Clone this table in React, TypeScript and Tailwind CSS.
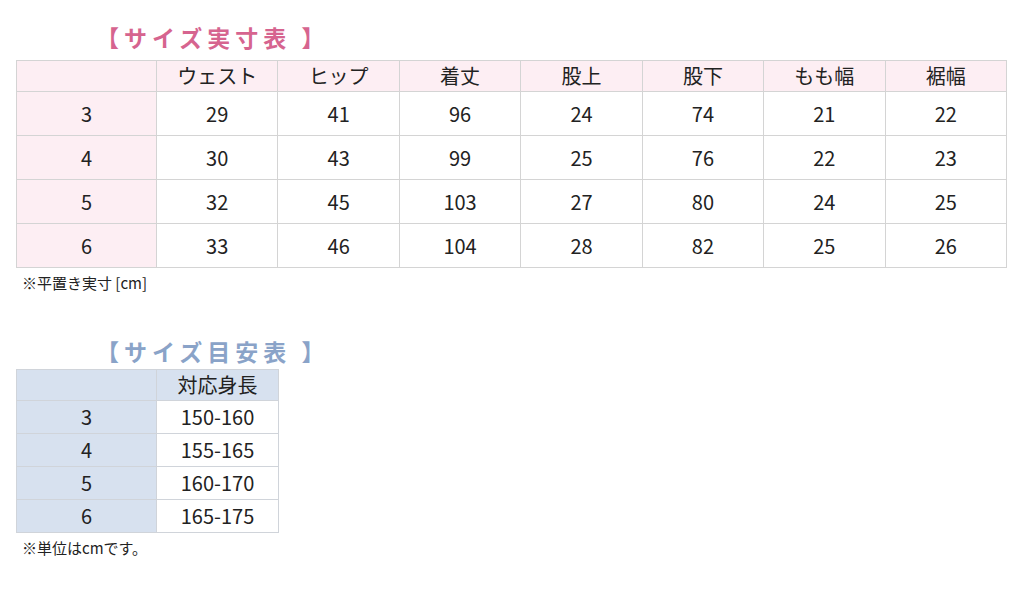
import React from "react";

const font = { fontFamily: '"Noto Sans CJK JP", "Noto Sans", sans-serif' };

const headers = ["ウェスト", "ヒップ", "着丈", "股上", "股下", "もも幅", "裾幅"];
const rows = [
  ["3", "29", "41", "96", "24", "74", "21", "22"],
  ["4", "30", "43", "99", "25", "76", "22", "23"],
  ["5", "32", "45", "103", "27", "80", "24", "25"],
  ["6", "33", "46", "104", "28", "82", "25", "26"],
];
const guide = [
  ["3", "150-160"],
  ["4", "155-165"],
  ["5", "160-170"],
  ["6", "165-175"],
];

const App: React.FC = () => {
  return (
    <div className="w-[1024px] h-[597px] bg-white text-[#222] overflow-hidden" style={font}>
      <div className="pl-[16px] pt-[20px]">
        <h2 className="ml-[80px] h-[34px] text-[23px] font-semibold tracking-[5px] text-[#d6648f] leading-[34px]">
          【サイズ実寸表 】
        </h2>
        <table className="mt-[6px] border-collapse table-fixed w-[991px]">
          <colgroup>
            <col className="w-[140px]" />
            {headers.map((h) => (
              <col key={h} />
            ))}
          </colgroup>
          <thead>
            <tr className="h-[31px] bg-[#fdeef3]">
              <th className="border border-[#d4d4d4]"></th>
              {headers.map((h) => (
                <th key={h} className="border border-[#d4d4d4] font-normal text-[20px] leading-none">
                  {h}
                </th>
              ))}
            </tr>
          </thead>
          <tbody>
            {rows.map((r) => (
              <tr key={r[0]} className="h-[44px]">
                {r.map((c, i) => (
                  <td
                    key={i}
                    className={`border border-[#d4d4d4] text-center text-[20px] leading-none ${i === 0 ? "bg-[#fdeef3]" : ""}`}
                  >
                    {c}
                  </td>
                ))}
              </tr>
            ))}
          </tbody>
        </table>
        <p className="mt-[5px] ml-[6px] text-[15px] leading-[20px]">※平置き実寸 [cm]</p>

        <h2 className="mt-[41px] ml-[80px] h-[34px] text-[23px] font-semibold tracking-[5px] text-[#8aa3c8] leading-[34px]">
          【サイズ目安表 】
        </h2>
        <table className="mt-[1px] border-collapse table-fixed w-[262px]">
          <colgroup>
            <col className="w-[140px]" />
            <col className="w-[122px]" />
          </colgroup>
          <thead>
            <tr className="h-[31px] bg-[#d7e1ef]">
              <th className="border border-[#d0d4da]"></th>
              <th className="border border-[#d0d4da] font-normal text-[20px] leading-none">対応身長</th>
            </tr>
          </thead>
          <tbody>
            {guide.map((r) => (
              <tr key={r[0]} className="h-[33px]">
                <td className="border border-[#d0d4da] bg-[#d7e1ef] text-center text-[20px] leading-none">{r[0]}</td>
                <td className="border border-[#d0d4da] text-center text-[20px] leading-none">{r[1]}</td>
              </tr>
            ))}
          </tbody>
        </table>
        <p className="mt-[5px] ml-[6px] text-[15px] leading-[20px]">※単位はcmです。</p>
      </div>
    </div>
  );
};

export default App;
